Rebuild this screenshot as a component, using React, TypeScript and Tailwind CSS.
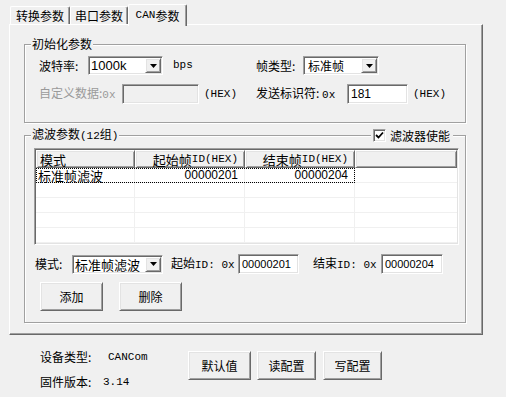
import React from "react";

const sunken =
  "border border-t-[#a0a0a0] border-l-[#a0a0a0] border-r-white border-b-white shadow-[inset_1px_1px_0_#696969,inset_-1px_-1px_0_#e3e3e3]";
const raised =
  "border border-t-white border-l-white border-r-[#696969] border-b-[#696969] shadow-[inset_1px_1px_0_#e3e3e3,inset_-1px_-1px_0_#a0a0a0]";

function M({ children, className = "" }: { children: React.ReactNode; className?: string }) {
  return <span className={"font-['Liberation_Mono',monospace] text-[11px] " + className}>{children}</span>;
}

function Tri() {
  return (
    <svg width="7" height="4" viewBox="0 0 7 4">
      <polygon points="0,0 7,0 3.5,4" fill="#000" />
    </svg>
  );
}

function Combo({ className, children }: { className: string; children: React.ReactNode }) {
  return (
    <div className={"flex shrink-0 items-center bg-white h-[19px] p-[1px] " + sunken + " " + className}>
      <div className="flex-1 min-w-0 pl-[1px] whitespace-nowrap">{children}</div>
      <div className={"w-[16px] h-[15px] shrink-0 flex items-center justify-center bg-[#f0f0f0] " + raised}>
        <Tri />
      </div>
    </div>
  );
}

function Input({ className, children, disabled }: { className: string; children?: React.ReactNode; disabled?: boolean }) {
  return (
    <div
      className={
        "flex shrink-0 items-center h-[20px] pl-[3px] " +
        (disabled ? "bg-[#f0f0f0] " : "bg-white ") +
        sunken +
        " " +
        className
      }
    >
      {children}
    </div>
  );
}

function Button({ className, children }: { className: string; children: React.ReactNode }) {
  return (
    <div className={"flex shrink-0 items-center justify-center bg-[#f0f0f0] h-[29px] " + raised + " " + className}>
      {children}
    </div>
  );
}

function Group({
  title,
  className,
  children,
}: {
  title: React.ReactNode;
  className: string;
  children: React.ReactNode;
}) {
  return (
    <div className={"relative border border-[#a0a0a0] shadow-[1px_1px_0_#fff,inset_1px_1px_0_#fff] " + className}>
      <div className="absolute left-[6px] -top-[8px] px-[1px] bg-[#f0f0f0] h-[14px] flex items-center whitespace-nowrap">
        {title}
      </div>
      {children}
    </div>
  );
}

function Tab({ className, children }: { className: string; children: React.ReactNode }) {
  return (
    <div
      className={
        "h-[18px] flex items-center justify-center border-t border-l border-r border-t-white border-l-white border-r-[#696969] shadow-[inset_-1px_0_0_#a0a0a0] rounded-t-[2px] " +
        className
      }
    >
      {children}
    </div>
  );
}

const sans = "font-['Liberation_Sans',sans-serif]";
const lbl = "shrink-0 whitespace-nowrap ";

export default function App() {
  return (
    <div className="w-[506px] h-[397px] bg-[#f0f0f0] overflow-hidden text-black font-['Noto_Sans_CJK_SC',sans-serif] text-[12px] leading-none">
      {/* Tabs */}
      <div className="flex items-end h-[24px] pl-[10px]">
        <Tab className="w-[60px]">转换参数</Tab>
        <Tab className="w-[58px]">串口参数</Tab>
        <div className="relative z-10 w-[59px] h-[22px] -mb-[2px] bg-[#f0f0f0] flex items-start pt-[5px] justify-center border-t border-l border-r border-t-white border-l-white border-r-[#696969] shadow-[inset_-1px_0_0_#a0a0a0] rounded-t-[2px]">
          <M>CAN</M>参数
        </div>
      </div>

      {/* Panel */}
      <div className="ml-[9px] w-[474px] h-[311px] border border-t-white border-l-white border-r-[#696969] border-b-[#696969] shadow-[inset_-1px_-1px_0_#a0a0a0] pl-[14px] pt-[19px]">
        {/* Init group */}
        <Group title="初始化参数" className="w-[442px] h-[79px]">
          <div className="pl-[14px] pt-[11px]">
            <div className="flex items-center h-[19px]">
              <div className="w-[217px] shrink-0 flex items-center">
                <span className={lbl + "w-[49px]"}>波特率:</span>
                <Combo className="w-[75px]">
                  <span className={sans + " text-[13px]"}>1000k</span>
                </Combo>
                <M className="ml-[10px]">bps</M>
              </div>
              <span className={lbl + "w-[47px]"}>帧类型:</span>
              <Combo className="w-[76px]">
                <span className="text-[12px] pl-[2px]">标准帧</span>
              </Combo>
            </div>
            <div className="flex items-center h-[20px] mt-[9px]">
              <div className="w-[217px] shrink-0 flex items-center">
                <span className={lbl + "w-[83px] text-[#9a9a9a]"}>
                  自定义数据:<M>0x</M>
                </span>
                <Input className="w-[77px]" disabled />
                <M className="ml-[5px]">(HEX)</M>
              </div>
              <span className={lbl + "w-[91px]"}>
                发送标识符: <M>0x</M>
              </span>
              <Input className="w-[61px]">
                <span className={sans + " text-[12px]"}>181</span>
              </Input>
              <M className="ml-[5px]">(HEX)</M>
            </div>
          </div>
        </Group>

        {/* Filter group */}
        <Group
          title={
            <span>
              滤波参数<M>(12</M>组<M>)</M>
            </span>
          }
          className="w-[442px] h-[188px] mt-[12px]"
        >
          <div className="absolute left-[346px] -top-[9px] h-[17px] w-[82px] bg-[#f0f0f0] flex items-center pl-[2px]">
            <div className={"w-[13px] h-[13px] bg-white flex items-center justify-center " + sunken}>
              <svg width="9" height="9" viewBox="0 0 9 9">
                <path d="M1 4 L3.5 6.5 L8 1.5" stroke="#000" strokeWidth="1.8" fill="none" />
              </svg>
            </div>
            <span className="ml-[4px] whitespace-nowrap">滤波器使能</span>
          </div>

          {/* Table */}
          <div className={"ml-[9px] mt-[12px] w-[425px] h-[97px] bg-white p-[1px] " + sunken}>
            <div className="flex h-[18px] text-[13px]">
              <div className={"w-[99px] flex items-center pl-[3px] bg-[#f0f0f0] " + raised}>模式</div>
              <div className={"w-[110px] flex items-center justify-end pr-[6px] bg-[#f0f0f0] whitespace-nowrap " + raised}>
                起始帧<M>ID(HEX)</M>
              </div>
              <div className={"w-[110px] flex items-center justify-end pr-[6px] bg-[#f0f0f0] whitespace-nowrap " + raised}>
                结束帧<M>ID(HEX)</M>
              </div>
              <div className={"flex-1 bg-[#f0f0f0] " + raised}></div>
            </div>
            {[0, 1, 2, 3, 4].map((i) => (
              <div key={i} className="flex h-[15px]">
                <div
                  className={
                    "flex " + (i === 0 ? "outline-1 outline-dotted outline-black -outline-offset-1" : "")
                  }
                >
                  <div className="w-[99px] flex items-center pl-[2px] pt-[1px] border-r border-b border-[#f0f0f0] text-[13px] whitespace-nowrap">
                    {i === 0 ? "标准帧滤波" : ""}
                  </div>
                  <div
                    className={
                      "w-[110px] flex items-center justify-end pr-[6px] border-r border-b border-[#f0f0f0] text-[12px] " +
                      sans
                    }
                  >
                    {i === 0 ? "00000201" : ""}
                  </div>
                  <div
                    className={
                      "w-[110px] flex items-center justify-end pr-[6px] border-r border-b border-[#f0f0f0] text-[12px] " +
                      sans
                    }
                  >
                    {i === 0 ? "00000204" : ""}
                  </div>
                </div>
                <div className="flex-1 border-b border-[#f0f0f0]"></div>
              </div>
            ))}
          </div>

          {/* Controls row */}
          <div className="flex items-center h-[20px] mt-[9px] pl-[10px]">
            <span className={lbl + "w-[37px]"}>模式:</span>
            <Combo className="w-[91px]">
              <span className="text-[13px]">标准帧滤波</span>
            </Combo>
            <span className={lbl + "ml-[8px] w-[67px]"}>
              起始<M>ID: 0x</M>
            </span>
            <Input className="w-[61px]">
              <span className={sans + " text-[11px]"}>00000201</span>
            </Input>
            <span className={lbl + "ml-[14px] w-[68px]"}>
              结束<M>ID: 0x</M>
            </span>
            <Input className="w-[62px]">
              <span className={sans + " text-[11px]"}>00000204</span>
            </Input>
          </div>

          {/* Buttons row */}
          <div className="flex mt-[8px] pl-[15px]">
            <Button className="w-[63px]">添加</Button>
            <Button className="w-[63px] ml-[16px]">删除</Button>
          </div>
        </Group>
      </div>

      {/* Bottom area */}
      <div className="flex items-start mt-[16px] pl-[40px]">
        <div className="w-[148px] shrink-0 -mt-[1px]">
          <div className="flex items-center h-[14px]">
            <span className={lbl + "w-[68px]"}>设备类型:</span>
            <M>CANCom</M>
          </div>
          <div className="flex items-center h-[14px] mt-[11px]">
            <span className={lbl + "w-[63px]"}>固件版本:</span>
            <M>3.14</M>
          </div>
        </div>
        <Button className="w-[63px] h-[28px]">默认值</Button>
        <Button className="w-[59px] h-[28px] ml-[6px]">读配置</Button>
        <Button className="w-[59px] h-[28px] ml-[7px]">写配置</Button>
      </div>
    </div>
  );
}
